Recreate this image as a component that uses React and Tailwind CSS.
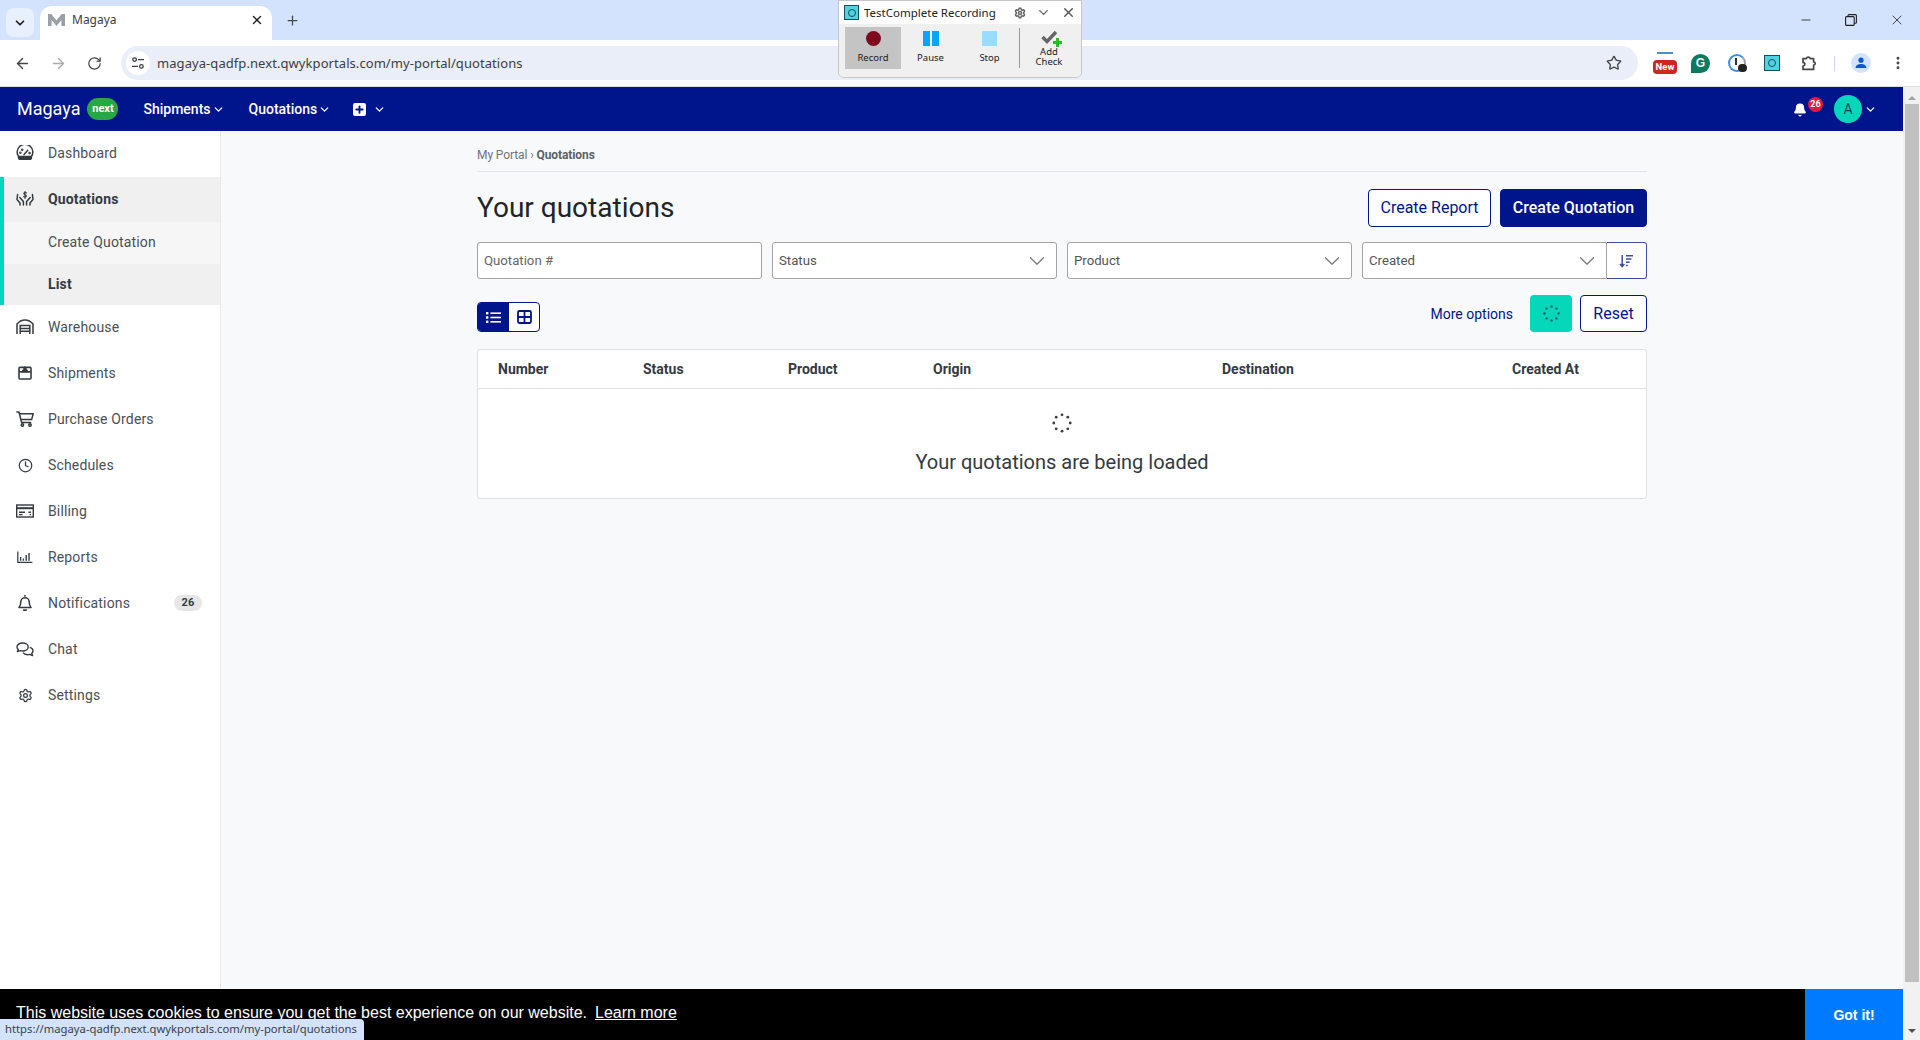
import { ArrowLeft, ArrowRight, Bell, ChevronDown, Clock, Minus, MoreVertical, Plus, RotateCw, Settings, Star, X } from 'lucide-react'

function GaugeIcon() {
  return (
    <svg width="18" height="16" viewBox="0 0 18 16" fill="none" stroke="currentColor" strokeWidth="1.5" strokeLinecap="round">
      <path d="M2.6 11.6A7.8 7.8 0 1 1 15.4 11.6" />
      <path d="M2.8 11.4h12.4c.4.6.4 2.8-.8 2.8H3.6c-1.2 0-1.2-2.2-.8-2.8Z" fill="currentColor" />
      <path d="M8 9.6 11.8 5.2" />
      <circle cx="4.4" cy="7.8" r=".5" />
      <circle cx="6.2" cy="4.8" r=".5" />
      <circle cx="13.6" cy="8" r=".5" />
    </svg>
  )
}

function HandsIcon() {
  return (
    <svg width="18" height="16" viewBox="0 0 18 16" fill="none" stroke="currentColor" strokeWidth="1.5" strokeLinecap="round" strokeLinejoin="round">
      <path d="M1.6 3.5 1 8.5l3 3.4V14" />
      <path d="M16.4 3.5 17 8.5l-3 3.4V14" />
      <path d="M3.8 6.5 7.4 10.6V14" />
      <path d="M14.2 6.5 10.6 10.6V14" />
      <path d="M10.4 1.8C9.6 1.2 7.8 1.3 7.8 2.6 7.8 4 10.4 3.6 10.4 5 10.4 6.2 8.4 6.3 7.6 5.6M9 .4v7" strokeWidth="1.1" />
    </svg>
  )
}

function WarehouseIcon() {
  return (
    <svg width="18" height="16" viewBox="0 0 18 16" fill="none" stroke="currentColor" strokeWidth="1.5">
      <path d="M1 15V5C3 2.6 6 1 9 1s6 1.6 8 4v10" />
      <path d="M4.2 15V6.4h9.6V15M4.2 9.4h9.6M4.2 12.2h9.6" />
    </svg>
  )
}

function BoxIcon() {
  return (
    <svg width="14" height="14" viewBox="0 0 14 14" fill="none" stroke="currentColor" strokeWidth="1.6">
      <rect x="1" y="1.4" width="12" height="11.6" rx="1" />
      <path d="M1 5.8h12" />
      <path d="M7 1.4 9.6 5.8H4.4Z" fill="currentColor" />
    </svg>
  )
}

function CartIcon() {
  return (
    <svg width="18" height="16" viewBox="0 0 18 16" fill="none" stroke="currentColor" strokeWidth="1.5" strokeLinejoin="round">
      <path d="M.4 1h2.6l2.6 10.6h9.6" />
      <path d="M3.6 2.8h13.6l-1.6 5.8H5" />
      <circle cx="6.4" cy="14" r="1.2" />
      <circle cx="14" cy="14" r="1.2" />
    </svg>
  )
}

function BillIcon() {
  return (
    <svg width="18" height="14" viewBox="0 0 18 14" fill="none" stroke="currentColor" strokeWidth="1.4">
      <rect x=".7" y="1" width="16.6" height="12" />
      <path d="M.7 4.2h16.6" strokeWidth="2" />
      <path d="M3 8.2h6M3 10.6h3.6M12.4 8.2h2.6M13.6 10.6h1.4" />
    </svg>
  )
}

function ChartIcon() {
  return (
    <svg width="16" height="14" viewBox="0 0 16 14" fill="none" stroke="currentColor" strokeWidth="1.2">
      <path d="M.8 1.5v10.9h14.6" />
      <path d="M3.6 7v3.8M6.4 8.5v2.3M9.2 5v5.8M12 3v7.8" strokeWidth="1.4" />
    </svg>
  )
}

function BellLine() {
  return (
    <svg width="14" height="16" viewBox="0 0 14 16" fill="none" stroke="currentColor" strokeWidth="1.5" strokeLinejoin="round">
      <path d="M7 0v1.8" />
      <path d="M1 12.4c1.4-1.6 1.8-3 1.8-5.4a4.2 4.2 0 0 1 8.4 0c0 2.4.4 3.8 1.8 5.4Z" />
      <path d="M5.4 14.4a1.7 1.7 0 0 0 3.2 0" fill="currentColor" />
    </svg>
  )
}

function ChatIcon() {
  return (
    <svg width="18" height="15" viewBox="0 0 18 15" fill="none" stroke="currentColor" strokeWidth="1.4" strokeLinejoin="round">
      <path d="M6.6 1C3.4 1 1 2.8 1 5c0 1 .5 1.9 1.3 2.6L1.4 9.6l2.8-1c.8.3 1.6.4 2.4.4 3.2 0 5.6-1.8 5.6-4S9.8 1 6.6 1Z" />
      <path d="M13.8 5.4c1.9.6 3.2 1.9 3.2 3.4 0 1-.5 1.9-1.3 2.5l.9 2.3-2.9-1.2c-.7.2-1.4.3-2.1.3-2 0-3.7-.8-4.6-2" />
    </svg>
  )
}

function ExtensionIcon() {
  return (
    <svg width="17" height="17" viewBox="0 0 17 17" fill="none" stroke="#444746" strokeWidth="1.7" strokeLinejoin="round">
      <path d="M2 3.6h3.4a2 2 0 0 1 3.8 0h3.4v3.4a1.6 1.6 0 0 1 0 3.2v4.2H2V11a1.8 1.8 0 0 0 0-3.6Z" />
    </svg>
  )
}

function Spinner({ size = 20, color = '#3a3f46' }) {
  const dots = [0, 45, 90, 135, 180, 225, 270, 315]
  return (
    <svg width={size} height={size} viewBox="0 0 20 20" fill={color}>
      {dots.map((a) => (
        <circle
          key={a}
          cx={10 + 8.2 * Math.cos((a * Math.PI) / 180)}
          cy={10 + 8.2 * Math.sin((a * Math.PI) / 180)}
          r={1.4}
        />
      ))}
    </svg>
  )
}

function ChromeBar() {
  return (
    <>
      <div className="flex h-10 items-end bg-[#d3e3fd] pl-[6px]">
        <div className="mb-[3px] flex h-[29px] w-7 items-center justify-center rounded-lg bg-[#e8f0fe]">
          <ChevronDown size={14} strokeWidth={3} className="text-[#1f1f1f]" />
        </div>
        <div className="ml-[6px] flex h-[34px] w-[232px] items-center rounded-t-xl bg-white pb-[6px] pl-2 pr-2">
          <svg width="17" height="12" viewBox="0 0 17 12" fill="#9aa0a6">
            <path d="M0 12V0h3.4l5.1 6.4L13.6 0H17v12h-3.6V6L8.5 12 3.6 6v6Z" />
          </svg>
          <span className="ml-[7px] flex-1 font-['Noto_Sans',sans-serif] text-xs text-[#3c4043]">Magaya</span>
          <X size={14} strokeWidth={2.4} className="text-[#1f1f1f]" />
        </div>
        <Plus size={15} strokeWidth={2} className="mb-[12px] ml-[13px] text-[#444746]" />
        <div className="flex-1" />
        <div className="mr-[15px] flex h-full w-[106px] items-center justify-between pb-[1px] text-[#1f1f1f]">
          <Minus size={14} strokeWidth={1.4} />
          <svg width="12" height="12" viewBox="0 0 12 12" fill="none" stroke="currentColor" strokeWidth="1.1">
            <rect x=".6" y="2.6" width="8.6" height="8.8" rx="1" />
            <path d="M3 2.6V1.6a1 1 0 0 1 1-1h6.4a1 1 0 0 1 1 1v6.6a1 1 0 0 1-1 1H9.2" />
          </svg>
          <X size={16} strokeWidth={1.2} />
        </div>
      </div>
      <div className="flex h-[47px] items-center rounded-t-lg border-b border-[#dadce0] bg-white pl-[14px]">
        <ArrowLeft size={17} strokeWidth={2} className="text-[#444746]" />
        <ArrowRight size={17} strokeWidth={2} className="ml-[19px] text-[#a8abaf]" />
        <RotateCw size={15} strokeWidth={2} className="ml-[20px] text-[#444746]" />
        <div className="ml-[19px] flex h-[34px] w-[1517px] items-center rounded-full bg-[#e9eef8] pl-[5px] pr-[16px]">
          <div className="flex h-6 w-6 items-center justify-center rounded-full bg-white">
            <svg width="14" height="14" viewBox="0 0 14 14" fill="none" stroke="#3c4043" strokeWidth="1.3">
              <circle cx="3.6" cy="3.6" r="1.8" />
              <circle cx="10.4" cy="10.4" r="1.8" />
              <path d="M7 3.6h6M1 10.4h6" />
            </svg>
          </div>
          <span className="ml-[7px] flex-1 pt-[1px] font-['Noto_Sans',sans-serif] text-[13px] tracking-[0.07px] text-[#3c4043]">
            magaya-qadfp.next.qwykportals.com/my-portal/quotations
          </span>
          <Star size={16} strokeWidth={2} className="text-[#444746]" />
        </div>
        <div className="relative ml-[15px] h-[22px] w-6">
          <div className="absolute left-[4px] top-0 h-[12px] w-4 border-t-2 border-[#4a90c9] bg-white" />
          <div className="absolute bottom-0 left-0 flex h-[14px] w-6 items-center justify-center rounded-sm bg-[#c8281e] text-[9.5px] font-bold leading-none text-white">
            New
          </div>
        </div>
        <div className="ml-[14px] flex h-[19px] w-[19px] items-center justify-center rounded-full rounded-bl-none bg-[#0b7a5e] font-['Liberation_Sans',sans-serif] text-xs font-bold text-white">
          G
        </div>
        <div className="relative ml-[18px] h-[18px] w-[18px] rounded-full border-2 border-[#3f8fd8] border-r-[#9aa0a6]">
          <div className="absolute left-[5px] top-[2px] h-[7px] w-[2px] bg-[#333]" />
          <div className="absolute -bottom-[2px] -right-[3px] h-[8px] w-[9px] rounded-sm bg-[#222]" />
        </div>
        <div className="ml-[18px] flex h-4 w-4 items-center justify-center border border-[#174f5c] bg-[#4fd3e0]">
          <div className="h-2 w-2 rounded-full border border-[#174f5c]" />
        </div>
        <div className="ml-[21px]"><ExtensionIcon /></div>
        <div className="ml-[16px] h-[15px] w-px bg-[#c8d8f4]" />
        <div className="ml-[16px] flex h-5 w-5 items-center justify-center rounded-full bg-[#d3e3fd]">
          <svg width="12" height="12" viewBox="0 0 12 12" fill="#0b57d0">
            <circle cx="6" cy="3.2" r="2.6" />
            <path d="M.6 11c0-2.6 2.6-4 5.4-4s5.4 1.4 5.4 4Z" />
          </svg>
        </div>
        <MoreVertical size={16} strokeWidth={2.4} className="ml-[19px] text-[#444746]" />
      </div>
    </>
  )
}

function Recorder() {
  return (
    <div className="absolute left-[838px] top-0 z-20 w-[244px] overflow-hidden rounded-b-md border border-[#c6c6c6] bg-white font-['Noto_Sans',sans-serif] text-[#222]">
      <div className="flex h-[23px] items-center pl-[5px] pr-[5px]">
        <div className="flex h-[15px] w-[15px] items-center justify-center border border-[#174f5c] bg-[#4fd3e0]">
          <div className="h-2 w-2 rounded-full border border-[#174f5c]" />
        </div>
        <span className="ml-[5px] flex-1 text-[11.5px]">TestComplete Recording</span>
        <Settings size={12} strokeWidth={3} className="text-[#666]" />
        <ChevronDown size={15} strokeWidth={2.2} className="ml-[10px] text-[#666]" />
        <X size={15} strokeWidth={2.2} className="ml-[10px] text-[#555]" />
      </div>
      <div className="flex h-[53px] items-start bg-[#f0f0f0] pl-[6px] pt-[3px] text-[9.5px] leading-[11px]">
        <div className="flex h-[42px] w-[56px] flex-col items-center gap-[6px] bg-[#c4c4c4] pt-[4px]">
          <div className="h-[15px] w-[15px] rounded-full bg-[#7f0a20]" />
          <span>Record</span>
        </div>
        <div className="flex h-[42px] w-[59px] flex-col items-center gap-[6px] pt-[4px]">
          <div className="flex h-[15px] gap-[2px]">
            <div className="w-[7px] bg-[#0aa5fa]" />
            <div className="w-[7px] bg-[#0aa5fa]" />
          </div>
          <span>Pause</span>
        </div>
        <div className="flex h-[42px] w-[59px] flex-col items-center gap-[6px] pt-[4px]">
          <div className="h-[15px] w-[15px] bg-[#9adcfd]" />
          <span>Stop</span>
        </div>
        <div className="mt-[1px] h-[40px] w-px bg-[#999]" />
        <div className="flex h-[42px] w-[58px] flex-col items-center pt-[3px]">
          <div className="relative h-[15px] w-[17px]">
            <svg width="17" height="14" viewBox="0 0 17 14" fill="none" stroke="#666" strokeWidth="3.4">
              <path d="M1.5 7 6 11.5 15 2" />
            </svg>
            <div className="absolute -bottom-[2px] right-[-1px] h-[9px] w-[3px] bg-[#22c020]" />
            <div className="absolute bottom-[1px] right-[-4px] h-[3px] w-[9px] bg-[#22c020]" />
          </div>
          <span className="mt-[2px] text-center leading-[10px]">Add<br />Check</span>
        </div>
      </div>
    </div>
  )
}

function TopNav() {
  return (
    <div className="flex h-11 shrink-0 items-center bg-[#00148c] pl-[17px] pr-[26px] text-white">
      <span className="text-lg font-normal">Magaya</span>
      <span className="ml-[7px] flex h-[22px] w-[31px] items-center justify-center rounded-full bg-[#28a745] text-[11px] font-bold">next</span>
      <span className="ml-[25px] text-sm font-medium">Shipments</span>
      <ChevronDown size={13} strokeWidth={2.4} className="ml-[1px]" />
      <span className="ml-[24px] text-sm font-medium">Quotations</span>
      <ChevronDown size={13} strokeWidth={2.4} className="ml-[1px]" />
      <div className="ml-[22px] flex h-[13px] w-[13px] items-center justify-center rounded-[2px] bg-white">
        <Plus size={11} strokeWidth={4} className="text-[#00148c]" />
      </div>
      <ChevronDown size={13} strokeWidth={2.4} className="ml-[7px]" />
      <div className="flex-1" />
      <div className="relative mt-[1px]">
        <Bell size={14} fill="white" strokeWidth={2} />
        <div className="absolute -right-[16px] -top-[6px] flex h-[15px] w-[15px] items-center justify-center rounded-full bg-[#e8173f] text-[9px] font-bold leading-none">26</div>
      </div>
      <div className="ml-[27px] flex h-7 w-7 items-center justify-center rounded-full bg-[#06d6b9] text-sm text-[#00485a]">A</div>
      <ChevronDown size={13} strokeWidth={2.4} className="ml-[2px]" />
    </div>
  )
}

const navItems = [
  { label: 'Dashboard', icon: <GaugeIcon /> },
  { label: 'Quotations', icon: <HandsIcon />, active: true },
  { label: 'Warehouse', icon: <WarehouseIcon /> },
  { label: 'Shipments', icon: <BoxIcon /> },
  { label: 'Purchase Orders', icon: <CartIcon /> },
  { label: 'Schedules', icon: <Clock size={15} strokeWidth={2} /> },
  { label: 'Billing', icon: <BillIcon /> },
  { label: 'Reports', icon: <ChartIcon /> },
  { label: 'Notifications', icon: <BellLine />, count: 26 },
  { label: 'Chat', icon: <ChatIcon /> },
  { label: 'Settings', icon: <Settings size={15} strokeWidth={2} /> },
]

function Sidebar() {
  return (
    <div className="w-[221px] shrink-0 border-r border-[#e6e8ec] bg-white text-sm tracking-[0.15px] text-[#495057]">
      {navItems.map((item) => (
        <div key={item.label}>
          <div
            className={
              item.active
                ? 'flex h-[45px] items-center border-l-4 border-[#06d6b9] bg-[#f0f0f0] pb-[2px] pr-[18px] font-bold text-[#343a40]'
                : 'flex h-[46px] items-center border-l-4 border-transparent pb-[2px] pr-[18px]'
            }
          >
            <div className="ml-[12px] flex w-[18px] justify-center text-[#343a40]">{item.icon}</div>
            <span className="ml-[14px] flex-1">{item.label}</span>
            {item.count && (
              <span className="flex h-4 w-7 items-center justify-center rounded-full bg-[#e6e6e6] text-[11px] font-bold text-[#343a40]">{item.count}</span>
            )}
          </div>
          {item.active && (
            <div className="border-l-4 border-[#06d6b9]">
              <div className="flex h-[42px] items-center bg-[#f6f6f6] pb-[2px] pl-[44px]">Create Quotation</div>
              <div className="flex h-[41px] items-center bg-[#f0f0f0] pb-[2px] pl-[44px] font-bold text-[#343a40]">List</div>
            </div>
          )}
        </div>
      ))}
    </div>
  )
}

function SelectBox({ label, className }) {
  return (
    <div className={`flex h-[37px] items-center justify-between rounded-[3px] border border-[#a3a3a3] bg-white pl-[6px] pr-[6px] text-[13.2px] text-[#555] ${className}`}>
      <span className="pt-[1px]">{label}</span>
      <ChevronDown size={26} strokeWidth={1.1} className="text-[#777]" />
    </div>
  )
}

function Filters() {
  return (
    <div className="mt-[15px] grid grid-cols-4 gap-[10px]">
      <div className="flex h-[37px] items-center rounded-[3px] border border-[#a3a3a3] bg-white pl-[6px] pt-[1px] text-[13.2px] text-[#666]">Quotation #</div>
      <SelectBox label="Status" />
      <SelectBox label="Product" />
      <div className="flex">
        <SelectBox label="Created" className="flex-1 rounded-r-none" />
        <div className="flex h-[37px] w-10 items-center justify-center rounded-r-[3px] border border-l-0 border-[#3d4c9f] bg-white text-[#3d4c9f]">
          <svg width="15" height="14" viewBox="0 0 15 14" fill="none" stroke="currentColor" strokeWidth="1.5">
            <path d="M3.2 1v11.4M1 10l2.2 2.6L5.4 10M7 1.8h7M7 5h5.4M7 8.2h3.6M7 11.4h1.8" />
          </svg>
        </div>
      </div>
    </div>
  )
}

function QuotationTable() {
  const cols = ['Number', 'Status', 'Product', 'Origin', 'Destination', 'Created At']
  return (
    <div className="mt-[17px] rounded-[3px] border border-[#dee2e6] bg-white">
      <div className="grid h-[39px] grid-cols-[145px_145px_145px_289px_290px_1fr] items-center border-b border-[#dee2e6] pb-[1px] pl-5 text-sm font-bold text-[#343a40]">
        {cols.map((c) => <span key={c}>{c}</span>)}
      </div>
      <div className="flex h-[109px] flex-col items-center pt-[24px]">
        <Spinner />
        <p className="mt-[15px] text-xl text-[#343a40]">Your quotations are being loaded</p>
      </div>
    </div>
  )
}

function MainContent() {
  return (
    <div className="min-w-0 flex-1 bg-[#f8f9fb]">
      <div className="mx-auto w-[1170px]">
        <div className="flex h-[41px] items-end border-b border-[#e2e4e9] pb-[8px] text-xs tracking-[-0.1px] text-[#6c757d]">
          My Portal ›&nbsp;<span className="font-bold text-[#5a6268]">Quotations</span>
        </div>
        <div className="mt-[17px] flex h-[38px] items-center justify-between">
          <h1 className="text-[28px] font-normal text-[#212529]">Your quotations</h1>
          <div className="flex gap-[9px] text-base">
            <button className="h-[38px] w-[123px] rounded border border-[#00148c] bg-white text-[#00148c]">Create Report</button>
            <button className="h-[38px] w-[147px] rounded border border-[#00148c] bg-[#00148c] font-medium text-white">Create Quotation</button>
          </div>
        </div>
        <Filters />
        <div className="mt-4 flex h-[37px] items-start justify-between">
          <div className="mt-[7px] flex h-[30px] w-[63px] overflow-hidden rounded border border-[#00148c] bg-white">
            <div className="flex w-[31px] items-center justify-center bg-[#00148c] text-white">
              <svg width="15" height="13" viewBox="0 0 15 13" fill="currentColor">
                <rect x="0" y="1" width="2.4" height="2.4" />
                <rect x="0" y="5.3" width="2.4" height="2.4" />
                <rect x="0" y="9.6" width="2.4" height="2.4" />
                <rect x="4.4" y="1.4" width="10.6" height="1.6" />
                <rect x="4.4" y="5.7" width="10.6" height="1.6" />
                <rect x="4.4" y="10" width="10.6" height="1.6" />
              </svg>
            </div>
            <div className="flex flex-1 items-center justify-center text-[#00148c]">
              <svg width="15" height="14" viewBox="0 0 15 14" fill="none" stroke="currentColor" strokeWidth="1.8">
                <rect x="1" y="1" width="13" height="12" rx="1.4" />
                <path d="M1 7h13M7.5 1v12" />
              </svg>
            </div>
          </div>
          <div className="flex items-center">
            <span className="text-sm text-[#00148c]">More options</span>
            <div className="ml-[17px] flex h-[37px] w-[42px] items-center justify-center rounded bg-[#06d6b9]">
              <Spinner size={17} color="#0b5f5f" />
            </div>
            <button className="ml-[8px] h-[37px] w-[67px] rounded border border-[#00148c] bg-white text-base text-[#00148c]">Reset</button>
          </div>
        </div>
        <QuotationTable />
      </div>
    </div>
  )
}

function Scrollbar() {
  return (
    <div className="flex w-[17px] shrink-0 flex-col items-center bg-[#f1f1f1]">
      <div className="mt-[9px] h-0 w-0 border-x-[4px] border-b-[4px] border-x-transparent border-b-[#a3a3a3]" />
      <div className="mt-[4px] w-[14px] flex-1 bg-[#c1c1c1]" />
      <div className="mb-[7px] mt-[47px] h-0 w-0 border-x-[4px] border-t-[4px] border-x-transparent border-t-[#505050]" />
    </div>
  )
}

function CookieBar() {
  return (
    <div className="absolute bottom-0 left-0 right-[17px] flex h-[51px] bg-black font-['Liberation_Sans',sans-serif] text-white">
      <p className="ml-4 flex-1 pt-3 text-base">
        This website uses cookies to ensure you get the best experience on our website.
        <span className="ml-[8px] underline">Learn more</span>
      </p>
      <div className="flex w-[98px] items-center justify-center bg-[#007bff] text-sm font-bold">Got it!</div>
    </div>
  )
}

export default function App() {
  return (
    <div className="relative flex h-[1040px] flex-col overflow-hidden font-['Roboto',sans-serif]">
      <ChromeBar />
      <Recorder />
      <div className="relative flex min-h-0 flex-1">
        <div className="flex min-w-0 flex-1 flex-col">
          <TopNav />
          <div className="flex min-h-0 flex-1">
            <Sidebar />
            <MainContent />
          </div>
        </div>
        <Scrollbar />
        <CookieBar />
      </div>
      <div className="absolute bottom-0 left-0 z-10 flex h-[21px] w-[364px] items-center rounded-tr bg-[#d3e3fd] pl-[5px] font-['Noto_Sans',sans-serif] text-[11.25px] text-[#3c4043]">
        https://magaya-qadfp.next.qwykportals.com/my-portal/quotations
      </div>
    </div>
  )
}
